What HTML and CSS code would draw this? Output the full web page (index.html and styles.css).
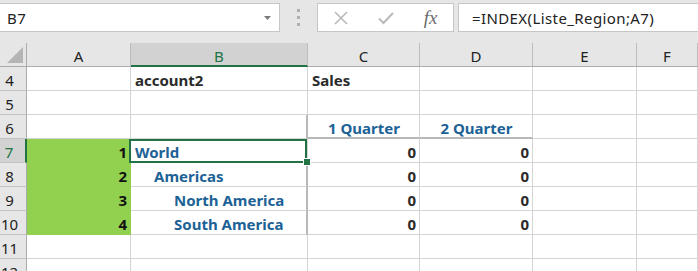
FILE: index.html
```html
<!DOCTYPE html>
<html>
<head>
<meta charset="utf-8">
<link rel="stylesheet" href="styles.css">
</head>
<body>
<div class="app">
  <div class="fbar">
    <div class="namebox">
      <span class="nb-text">B7</span>
      <svg class="caret" width="7" height="4" viewBox="0 0 7 4"><polygon points="0,0 7,0 3.5,4" fill="#7a7a7a"/></svg>
    </div>
    <div class="grip"><i></i><i></i><i></i></div>
    <div class="fxbox">
      <span class="slot"><svg width="14" height="14" viewBox="0 0 14 14"><path d="M1 1 L13 13 M13 1 L1 13" stroke="#b9b9b9" stroke-width="1.6" fill="none"/></svg></span>
      <span class="slot"><svg width="16" height="14" viewBox="0 0 16 14"><path d="M1 7.5 L5.5 12 L15 2" stroke="#b9b9b9" stroke-width="2" fill="none"/></svg></span>
      <span class="slot fx">fx</span>
    </div>
    <div class="formula">=INDEX(Liste_Region;A7)</div>
  </div>
  <div class="sheet">
    <div class="corner"><svg width="16" height="16" viewBox="0 0 16 16"><polygon points="16,0 16,16 0,16" fill="#b5b5b5"/></svg></div>
    <div class="ch">A</div>
    <div class="ch sel">B</div>
    <div class="ch">C</div>
    <div class="ch">D</div>
    <div class="ch">E</div>
    <div class="ch">F</div>

    <div class="rh">4</div>
    <div class="c"></div>
    <div class="c b dark">account2</div>
    <div class="c b dark">Sales</div>
    <div class="c"></div>
    <div class="c"></div>
    <div class="c"></div>

    <div class="rh">5</div>
    <div class="c"></div>
    <div class="c"></div>
    <div class="c"></div>
    <div class="c"></div>
    <div class="c"></div>
    <div class="c"></div>

    <div class="rh">6</div>
    <div class="c"></div>
    <div class="c thick-r"></div>
    <div class="c b blue ctr thick-b">1 Quarter</div>
    <div class="c b blue ctr thick-b">2 Quarter</div>
    <div class="c"></div>
    <div class="c"></div>

    <div class="rh sel">7</div>
    <div class="c g num b">1</div>
    <div class="c b blue active">World</div>
    <div class="c num b dark">0</div>
    <div class="c num b dark">0</div>
    <div class="c"></div>
    <div class="c"></div>

    <div class="rh">8</div>
    <div class="c g num b">2</div>
    <div class="c b blue ind1 thick-r">Americas</div>
    <div class="c num b dark">0</div>
    <div class="c num b dark">0</div>
    <div class="c"></div>
    <div class="c"></div>

    <div class="rh">9</div>
    <div class="c g num b">3</div>
    <div class="c b blue ind2 thick-r">North America</div>
    <div class="c num b dark">0</div>
    <div class="c num b dark">0</div>
    <div class="c"></div>
    <div class="c"></div>

    <div class="rh">10</div>
    <div class="c g num b">4</div>
    <div class="c b blue ind2 thick-r">South America</div>
    <div class="c num b dark">0</div>
    <div class="c num b dark">0</div>
    <div class="c"></div>
    <div class="c"></div>

    <div class="rh">11</div>
    <div class="c"></div>
    <div class="c"></div>
    <div class="c"></div>
    <div class="c"></div>
    <div class="c"></div>
    <div class="c"></div>

    <div class="rh">12</div>
    <div class="c"></div>
    <div class="c"></div>
    <div class="c"></div>
    <div class="c"></div>
    <div class="c"></div>
    <div class="c"></div>
  </div>
</div>
</body>
</html>
```
FILE: styles.css
```css
* { box-sizing: border-box; }
html, body { margin: 0; padding: 0; }
body {
  width: 698px;
  height: 271px;
  overflow: hidden;
  font-family: "Noto Sans", "Open Sans", sans-serif;
  background: #ffffff;
}
.app { width: 698px; }

/* formula bar */
.fbar {
  display: flex;
  align-items: flex-start;
  height: 43px;
  padding-top: 3px;
  background: #e6e6e6;
}
.namebox {
  margin-left: -1px;
  width: 281px;
  height: 29px;
  background: #fff;
  border: 1px solid #c6c6c6;
  display: flex;
  align-items: center;
  justify-content: space-between;
  padding: 0 7px 0 7px;
}
.nb-text { font-size: 15px; color: #222; line-height: 20px; padding-top: 1px; letter-spacing: 0.4px; }
.caret { margin-right: 1px; }
.grip {
  width: 37px;
  height: 29px;
  display: flex;
  flex-direction: column;
  align-items: center;
  justify-content: center;
  gap: 4px;
}
.grip i {
  display: block;
  width: 3px;
  height: 3px;
  background: #b0b0b0;
}
.fxbox {
  width: 137px;
  height: 29px;
  background: #fff;
  border: 1px solid #c6c6c6;
  display: flex;
  align-items: center;
}
.slot {
  width: 45px;
  display: flex;
  justify-content: center;
  align-items: center;
}
.fx {
  font-family: "Liberation Serif", "DejaVu Serif", serif;
  font-style: italic;
  font-size: 19px;
  color: #6b6b6b;
  line-height: 20px;
}
.formula {
  margin-left: 4px;
  flex: 1;
  margin-right: -2px;
  height: 29px;
  background: #fff;
  border: 1px solid #c6c6c6;
  font-size: 15px;
  letter-spacing: 0.4px;
  color: #222;
  line-height: 20px;
  padding: 4px 0 0 13px;
  white-space: nowrap;
}

/* sheet grid */
.sheet {
  display: grid;
  grid-template-columns: 27px 104px 177px 112px 113px 104px 1fr;
  grid-auto-rows: 24px;
}
.sheet > div {
  border-right: 1px solid #d4d4d4;
  border-bottom: 1px solid #d4d4d4;
  font-size: 15px;
  line-height: 20px;
  padding-top: 3px;
  white-space: nowrap;
  overflow: visible;
}
.corner {
  background: #e6e6e6;
  border-right-color: #ababab !important;
  border-bottom-color: #ababab !important;
  display: flex;
  align-items: flex-start;
  padding: 4px 0 0 7px !important;
}
.ch {
  background: #e6e6e6;
  border-right-color: #bdbdbd !important;
  border-bottom-color: #ababab !important;
  text-align: center;
  color: #222;
}
.ch.sel {
  background: #d2d2d2;
  color: #217346;
  border-bottom: 2px solid #217346 !important;
}
.rh {
  background: #e6e6e6;
  border-right-color: #ababab !important;
  border-bottom-color: #c2c2c2 !important;
  text-align: center;
  padding-right: 7px;
  color: #222;
}
.rh.sel {
  background: #d2d2d2;
  color: #217346;
  border-right: 2px solid #217346 !important;
}
.c { padding-left: 4px; padding-right: 3px; }
.b { font-weight: 700; }
.dark { color: #2b2b2b; }
.blue { color: #1d6296; }
.ctr { text-align: center; }
.num { text-align: right; }
.ind1 { padding-left: 23px; }
.ind2 { padding-left: 43px; }
.g {
  background: #92d050;
  color: #111;
  border-right-color: #92d050 !important;
  border-bottom-color: #92d050 !important;
}
.thick-r { border-right: 2px solid #b8b8b8 !important; }
.thick-b { border-bottom: 2px solid #b8b8b8 !important; }
.active { position: relative; }
.active::after {
  content: "";
  position: absolute;
  top: 0;
  left: -2px;
  right: 0;
  bottom: -1px;
  border: 2px solid #217346;
}
.active::before {
  content: "";
  position: absolute;
  right: -4px;
  bottom: -4px;
  width: 6px;
  height: 6px;
  background: #217346;
  border: 1px solid #fff;
  z-index: 2;
}
```
